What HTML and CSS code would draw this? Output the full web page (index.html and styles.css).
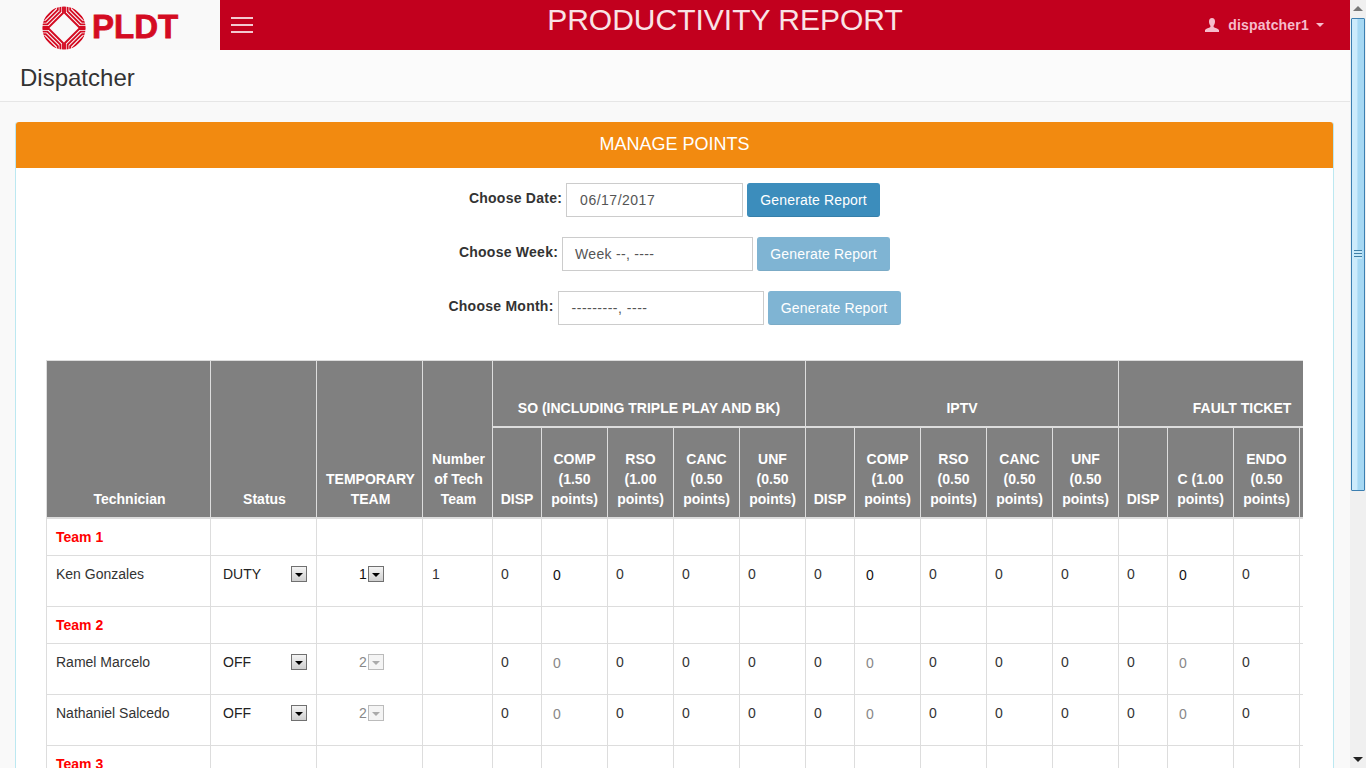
FILE: index.html
```html
<!DOCTYPE html>
<html lang="en">
<head>
	<meta charset="utf-8" />
	<title>Productivity Report</title>
	<link rel="stylesheet" href="styles.css">
</head>
<body>
	<div class="page">
		<div class="main">
			<header class="topbar">
				<div class="logo">
					<svg class="logo-mark" width="44" height="44" viewBox="-22 -22 44 44">
						<defs>
							<clipPath id="disc"><circle r="21.6" /></clipPath>
							<path id="band" d="M-1 -30V-15L-15 -1H-30M-3.6 -30V-16.6L-16.6 -3.6H-30M-6.2 -30V-18.2L-18.2 -6.2H-30M-8.8 -30V-19.8L-19.8 -8.8H-30" fill="none" stroke="#d40b22" stroke-width="1.9" />
						</defs>
						<g clip-path="url(#disc)">
							<use href="#band" />
							<use href="#band" transform="rotate(90)" />
							<use href="#band" transform="rotate(180)" />
							<use href="#band" transform="rotate(270)" />
						</g>
					</svg>
					<span class="logo-text">PLDT</span>
				</div>
				<div class="menu-toggle"><span></span><span></span><span></span></div>
				<h1 class="report-title">PRODUCTIVITY REPORT</h1>
				<div class="user-menu">
					<svg class="user-icon" width="14" height="14" viewBox="0 0 14 14">
						<path d="M7 0C5 0 4 1.500 4 3.500C4 5.500 4.800 7 5.400 7.800V9C4 10 1 10.500 0 12V14H14V12C13 10.500 10 10 8.600 9V7.800C9.200 7 10 5.500 10 3.500C10 1.500 9 0 7 0Z" fill="#f6bccb" />
					</svg>
					<span class="user-name">dispatcher1</span>
					<span class="caret"></span>
				</div>
			</header>
			<div class="subheader">Dispatcher</div>
			<div class="content">
				<section class="panel">
					<div class="panel-heading">MANAGE POINTS</div>
					<div class="panel-body">
						<form class="filters">
							<div class="filter-row">
								<label>Choose Date:</label>
								<div class="fake-input date-input">06/17/2017</div>
								<button type="button" class="btn">Generate Report</button>
							</div>
							<div class="filter-row">
								<label>Choose Week:</label>
								<div class="fake-input week-input">Week --, ----</div>
								<button type="button" class="btn btn-disabled">Generate Report</button>
							</div>
							<div class="filter-row">
								<label>Choose Month:</label>
								<div class="fake-input month-input">---------, ----</div>
								<button type="button" class="btn btn-disabled">Generate Report</button>
							</div>
						</form>
						<div class="table-wrap">
							<table class="report">
								<colgroup>
									<col class="c-tech"><col class="c-status"><col class="c-temp"><col class="c-num">
									<col class="c-disp"><col class="c-pts"><col class="c-pts"><col class="c-pts"><col class="c-pts">
									<col class="c-disp"><col class="c-pts"><col class="c-pts"><col class="c-pts"><col class="c-pts">
									<col class="c-disp"><col class="c-pts"><col class="c-pts"><col class="c-pts">
								</colgroup>
								<thead>
									<tr class="head-top">
										<th rowspan="2">Technician</th>
										<th rowspan="2">Status</th>
										<th rowspan="2">TEMPORARY TEAM</th>
										<th rowspan="2">Number of Tech Team</th>
										<th colspan="5">SO (INCLUDING TRIPLE PLAY AND BK)</th>
										<th colspan="5">IPTV</th>
										<th colspan="4">FAULT TICKET</th>
									</tr>
									<tr class="head-sub">
										<th>DISP</th><th>COMP (1.50 points)</th><th>RSO (1.00 points)</th><th>CANC (0.50 points)</th><th>UNF (0.50 points)</th>
										<th>DISP</th><th>COMP (1.00 points)</th><th>RSO (0.50 points)</th><th>CANC (0.50 points)</th><th>UNF (0.50 points)</th>
										<th>DISP</th><th>C (1.00 points)</th><th>ENDO (0.50 points)</th><th></th>
									</tr>
								</thead>
								<tbody>
									<tr class="team-row">
										<td class="team-name">Team 1</td>
										<td></td><td></td><td></td><td></td><td></td><td></td><td></td><td></td><td></td><td></td><td></td><td></td><td></td><td></td><td></td><td></td><td></td>
									</tr>
									<tr class="tech-row">
										<td class="tech-name">Ken Gonzales</td>
										<td><span class="dropdown"><span class="dropdown-text">DUTY</span><span class="arrow-btn"></span></span></td>
										<td class="temp-cell"><span class="mini-dropdown">1<span class="arrow-btn"></span></span></td>
										<td class="tech-count">1</td>
										<td>0</td><td><span class="editable">0</span></td><td>0</td><td>0</td><td>0</td>
										<td>0</td><td><span class="editable">0</span></td><td>0</td><td>0</td><td>0</td>
										<td>0</td><td><span class="editable">0</span></td><td>0</td><td></td>
									</tr>
									<tr class="team-row">
										<td class="team-name">Team 2</td>
										<td></td><td></td><td></td><td></td><td></td><td></td><td></td><td></td><td></td><td></td><td></td><td></td><td></td><td></td><td></td><td></td><td></td>
									</tr>
									<tr class="tech-row">
										<td class="tech-name">Ramel Marcelo</td>
										<td><span class="dropdown"><span class="dropdown-text">OFF</span><span class="arrow-btn"></span></span></td>
										<td class="temp-cell"><span class="mini-dropdown off">2<span class="arrow-btn"></span></span></td>
										<td></td>
										<td>0</td><td><span class="editable off">0</span></td><td>0</td><td>0</td><td>0</td>
										<td>0</td><td><span class="editable off">0</span></td><td>0</td><td>0</td><td>0</td>
										<td>0</td><td><span class="editable off">0</span></td><td>0</td><td></td>
									</tr>
									<tr class="tech-row">
										<td class="tech-name">Nathaniel Salcedo</td>
										<td><span class="dropdown"><span class="dropdown-text">OFF</span><span class="arrow-btn"></span></span></td>
										<td class="temp-cell"><span class="mini-dropdown off">2<span class="arrow-btn"></span></span></td>
										<td></td>
										<td>0</td><td><span class="editable off">0</span></td><td>0</td><td>0</td><td>0</td>
										<td>0</td><td><span class="editable off">0</span></td><td>0</td><td>0</td><td>0</td>
										<td>0</td><td><span class="editable off">0</span></td><td>0</td><td></td>
									</tr>
									<tr class="team-row">
										<td class="team-name">Team 3</td>
										<td></td><td></td><td></td><td></td><td></td><td></td><td></td><td></td><td></td><td></td><td></td><td></td><td></td><td></td><td></td><td></td><td></td>
									</tr>
								</tbody>
							</table>
						</div>
					</div>
				</section>
			</div>
		</div>
		<div class="scrollbar">
			<div class="scroll-btn"><span class="arrow-up"></span></div>
			<div class="scroll-thumb"><span class="grip"></span></div>
			<div class="scroll-track"></div>
			<div class="scroll-btn"><span class="arrow-down"></span></div>
		</div>
	</div>
</body>
</html>
```

FILE: styles.css
```css
html, body
{
	margin: 0;
	height: 100%;
	overflow: hidden;
}

body
{
	background-color: #F9F9F9;
	color: #333333;
	font-family: "Liberation Sans", Arial, sans-serif;
	font-size: 14px;
	line-height: 20px;
}

.page
{
	display: flex;
	height: 768px;
}

.main
{
	flex: 1;
	min-width: 0;
	overflow: hidden;
}

/* top bar */
.topbar
{
	display: flex;
	align-items: center;
	height: 50px;
	background-color: #C2001E;
	color: #FFFFFF;
}

.logo
{
	display: flex;
	align-items: center;
	width: 220px;
	height: 50px;
	padding-left: 42px;
	box-sizing: border-box;
	background-color: #F9F9F9;
	overflow: hidden;
}

.logo-mark
{
	flex: none;
	margin-top: 5px;
}

.logo-text
{
	margin-left: 6px;
	margin-top: 4px;
	color: #D40B22;
	font-size: 33px;
	line-height: 40px;
	font-weight: bold;
	-webkit-text-stroke: 0.8px #D40B22;
}

.menu-toggle
{
	display: flex;
	flex-direction: column;
	gap: 5px;
	width: 22px;
	margin-left: 11px;
}

.menu-toggle span
{
	height: 2px;
	background-color: #F3C9D0;
}

.report-title
{
	flex: none;
	width: 544px;
	margin: 0 0 0 200px;
	color: #F9E3E6;
	font-size: 30px;
	line-height: 40px;
	font-weight: normal;
	text-align: center;
	align-self: flex-start;
}

.user-menu
{
	display: flex;
	align-items: center;
	margin-left: auto;
	padding-right: 26px;
	color: #F6BCCB;
	font-weight: bold;
}

.user-name
{
	margin-left: 9px;
	letter-spacing: 0.2px;
}

.caret
{
	width: 0;
	height: 0;
	margin-left: 7px;
	border-top: 4px solid #F6BCCB;
	border-left: 4px solid transparent;
	border-right: 4px solid transparent;
}

/* sub header */
.subheader
{
	height: 52px;
	padding-left: 20px;
	box-sizing: border-box;
	background-color: #FBFBFB;
	border-bottom: 1px solid #E6E6E6;
	color: #333333;
	font-size: 24px;
	line-height: 56px;
}

/* panel */
.content
{
	padding: 20px 16px 0 15px;
}

.panel
{
	background-color: #FFFFFF;
	border: 1px solid #BCE8F1;
	border-top: none;
	border-radius: 3px;
}

.panel-heading
{
	height: 46px;
	background-color: #F28A10;
	border-radius: 3px 3px 0 0;
	color: #FFFFFF;
	font-size: 18px;
	line-height: 44px;
	text-align: center;
}

.panel-body
{
	padding: 15px 30px 0;
}

.filters
{
	display: flex;
	flex-direction: column;
	gap: 20px;
	margin-bottom: 35px;
}

.filter-row
{
	display: flex;
	justify-content: center;
	gap: 4px;
}

.filter-row label
{
	color: #333333;
	font-weight: bold;
	line-height: 30px;
	letter-spacing: 0.25px;
}

.fake-input
{
	height: 34px;
	box-sizing: border-box;
	padding: 6px 12px;
	background-color: #FFFFFF;
	border: 1px solid #CCCCCC;
	color: #555555;
}

.date-input
{
	width: 177px;
	padding-left: 13px;
	letter-spacing: 0.5px;
}

.week-input
{
	width: 191px;
	letter-spacing: 0.3px;
}

.month-input
{
	width: 206px;
	padding-left: 13px;
	letter-spacing: 0.5px;
}

.btn
{
	width: 133px;
	height: 34px;
	padding: 0;
	background-color: #3C8DBC;
	border: 1px solid #367FA9;
	border-top-color: #3C8DBC;
	border-left-color: #3C8DBC;
	border-right-color: #3C8DBC;
	border-radius: 3px;
	color: #FFFFFF;
	font-family: inherit;
	font-size: 14px;
	letter-spacing: 0.15px;
}

.btn-disabled
{
	opacity: 0.65;
}

/* report table */
.table-wrap
{
	overflow: hidden;
}

table.report
{
	width: 1320px;
	table-layout: fixed;
	border-collapse: collapse;
}

.c-tech { width: 164px; }
.c-status { width: 106px; }
.c-temp { width: 106px; }
.c-num { width: 70px; }
.c-disp { width: 49px; }
.c-pts { width: 66px; }

table.report th, table.report td
{
	border: 1px solid #DDDDDD;
	padding: 8px;
	box-sizing: border-box;
	vertical-align: top;
}

table.report th
{
	background-color: #808080;
	color: #FFFFFF;
	font-weight: bold;
	text-align: center;
	vertical-align: bottom;
}

table.report thead tr.head-top th
{
	height: 66px;
}

table.report thead tr.head-sub th
{
	height: 91px;
	border-top-width: 2px;
	border-bottom-width: 2px;
	padding-left: 4px;
	padding-right: 4px;
}

table.report thead tr.head-top th[rowspan]
{
	border-bottom-width: 2px;
	padding-left: 9px;
	padding-right: 7px;
}

.team-row td
{
	height: 37px;
}

.tech-row td
{
	height: 51px;
}

table.report td.team-name, table.report td.tech-name, table.report td.tech-count
{
	padding-left: 9px;
}

td.team-name
{
	color: #FF0000;
	font-weight: bold;
}

.dropdown
{
	display: flex;
	align-items: center;
	justify-content: space-between;
	height: 20px;
	padding: 0 1px 0 4px;
	color: #222222;
}

.mini-dropdown
{
	display: inline-flex;
	align-items: center;
	gap: 1px;
	height: 20px;
	padding-left: 4px;
	color: #111111;
}

.temp-cell
{
	text-align: center;
}

.arrow-btn
{
	position: relative;
	display: block;
	width: 16px;
	height: 16px;
	box-sizing: border-box;
	background-image: linear-gradient(#F4F4F4, #CFCFCF);
	border: 1px solid #707070;
}

.arrow-btn:after
{
	content: "";
	position: absolute;
	left: 3px;
	top: 6px;
	border-top: 4px solid #000000;
	border-left: 4px solid transparent;
	border-right: 4px solid transparent;
}

.mini-dropdown.off
{
	color: #888888;
}

.off .arrow-btn
{
	background-image: none;
	background-color: #F4F4F4;
	border-color: #BBBBBB;
}

.off .arrow-btn:after
{
	border-top-color: #AAAAAA;
}

.editable
{
	display: block;
	margin: 1px 0 0 3px;
	color: #111111;
}

.editable.off
{
	color: #888888;
}

/* browser style scrollbar */
.scrollbar
{
	display: flex;
	flex-direction: column;
	flex: none;
	width: 16px;
	background-color: #F0F0F0;
}

.scroll-btn
{
	display: flex;
	align-items: center;
	justify-content: center;
	flex: none;
	height: 17px;
}

.arrow-up
{
	border-bottom: 5px solid #777777;
	border-left: 5px solid transparent;
	border-right: 5px solid transparent;
}

.arrow-down
{
	border-top: 5px solid #222222;
	border-left: 5px solid transparent;
	border-right: 5px solid transparent;
}

.scroll-thumb
{
	display: flex;
	align-items: center;
	justify-content: center;
	flex: none;
	height: 473px;
	margin: 1px 1px 0;
	box-sizing: border-box;
	background-image: linear-gradient(90deg, #CDEBFB 0, #CDEBFB 40%, #A6D8F3 50%, #A6D8F3 100%);
	border: 1px solid #3C7FB1;
	border-radius: 1px;
}

.grip
{
	display: block;
	width: 8px;
	height: 9px;
	background-image: repeating-linear-gradient(#3F7FA6 0, #3F7FA6 1px, #C7E8F8 1px, #C7E8F8 3px);
}

.scroll-track
{
	flex: 1;
}
```
